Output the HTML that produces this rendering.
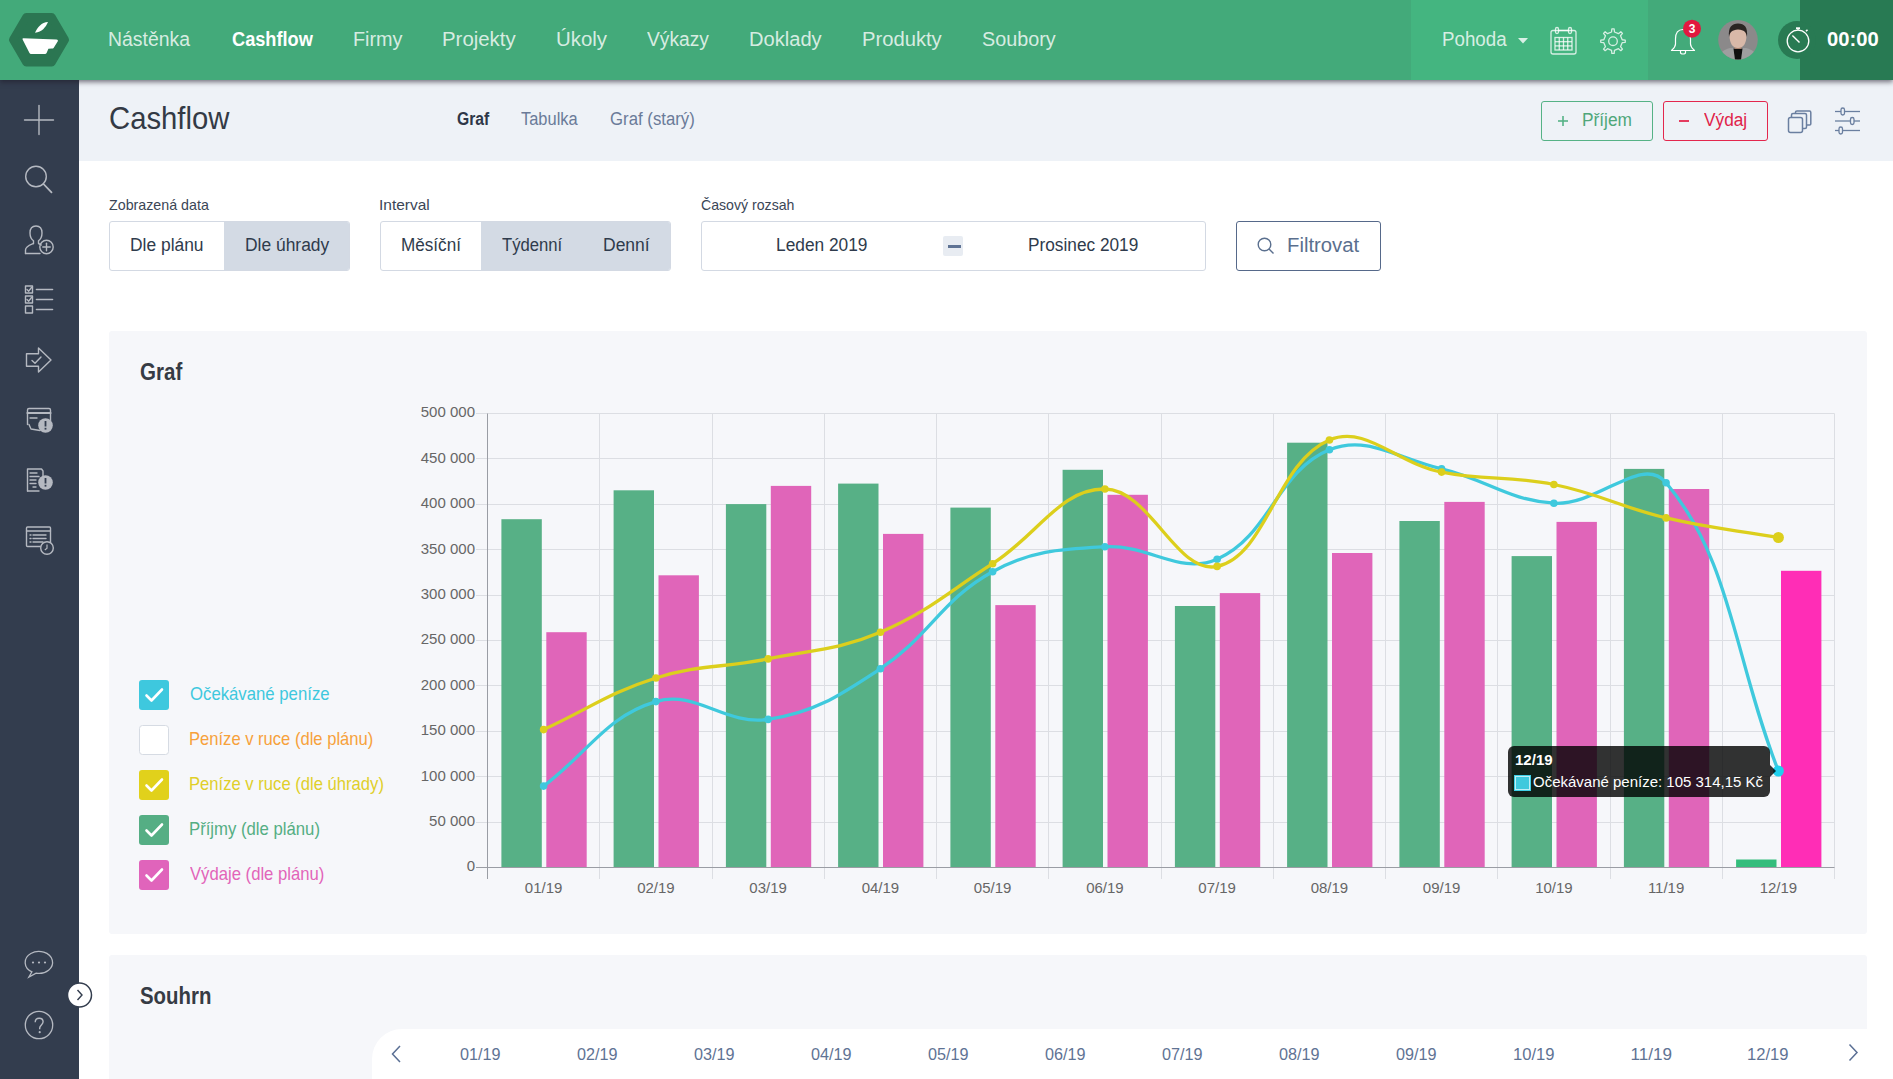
<!DOCTYPE html>
<html lang="cs">
<head>
<meta charset="utf-8">
<title>Cashflow</title>
<style>
html,body{margin:0;padding:0;}
body{width:1893px;height:1079px;overflow:hidden;position:relative;background:#ffffff;font-family:"Liberation Sans",sans-serif;}
.a{position:absolute;}
.t{position:absolute;white-space:nowrap;line-height:1;transform-origin:0 0;z-index:10;}
#hdr{left:0;top:0;width:1893px;height:80px;background:#43aa7a;z-index:5;box-shadow:0 2px 5px rgba(30,25,40,0.6);}
#side{left:0;top:80px;width:79px;height:999px;background:#333d4e;z-index:4;}
#sub{left:79px;top:80px;width:1814px;height:81px;background:#eef2f7;}
.card{background:#f6f7fa;border-radius:3px;}
.seg{border:1px solid #d3d9e3;border-radius:3px;background:#fff;box-sizing:border-box;overflow:hidden;}
.ic{position:absolute;overflow:visible;}
#tip{left:1508px;top:746px;width:262px;height:51px;background:rgba(0,0,0,0.8);border-radius:6px;z-index:8;}
</style>
</head>
<body>
<!-- header -->
<div class="a" id="hdr">
  <div class="a" style="left:1411px;top:0;width:237px;height:80px;background:#44b580;"></div>
  <div class="a" style="left:1800px;top:0;width:93px;height:80px;background:#287a53;"></div>
  <div class="a" style="left:1778px;top:21px;width:38px;height:38px;border-radius:50%;background:#287a53;"></div>
</div>

<svg class="a" style="left:0;top:0;z-index:6;" width="1893" height="80" viewBox="0 0 1893 80">
  <!-- logo -->
  <path d="M26.3 17 L51.7 17 L65 39.8 L51.7 62.5 L26.3 62.5 L13 39.8 Z" fill="#2b7652" stroke="#2b7652" stroke-width="8" stroke-linejoin="round"/>
  <path d="M23.3 38.3 L56.5 39.6 Q58.5 39.8 57.8 41.2 L53.6 48 Q53.1 48.6 52 48.6 L48.4 48.8 L46.6 53 Q46.1 54 45 54 L31 54 Q30 54 29.5 53 L22.6 39.6 Q22.2 38.3 23.3 38.3 Z" fill="#ffffff"/>
  <path d="M35 32.8 C37.5 27 41.5 22.5 48 22 C45.5 27.5 42 32 35 32.8 Z" fill="#ffffff"/>
  <!-- caret -->
  <path d="M1518 38 L1528 38 L1523 43.5 Z" fill="rgba(255,255,255,0.8)"/>
  <!-- calendar -->
  <g fill="none" stroke="rgba(255,255,255,0.78)" stroke-width="1.3">
    <rect x="1551" y="30.5" width="25" height="23.5" rx="2"/>
    <line x1="1558" y1="30.5" x2="1569" y2="30.5"/>
    <rect x="1555.5" y="27.5" width="3" height="6" rx="1.5"/>
    <rect x="1568.5" y="27.5" width="3" height="6" rx="1.5"/>
    <rect x="1555" y="37.5" width="17" height="12.5"/>
    <line x1="1559.25" y1="37.5" x2="1559.25" y2="50"/>
    <line x1="1563.5" y1="37.5" x2="1563.5" y2="50"/>
    <line x1="1567.75" y1="37.5" x2="1567.75" y2="50"/>
    <line x1="1555" y1="41.7" x2="1572" y2="41.7"/>
    <line x1="1555" y1="45.9" x2="1572" y2="45.9"/>
  </g>
  <!-- gear -->
  <g fill="none" stroke="rgba(255,255,255,0.78)" stroke-width="1.3" stroke-linejoin="round">
    <path d="M1611.55 32.01 L1611.84 28.95 L1614.16 28.95 L1614.45 32.01 L1618.47 33.68 L1620.84 31.72 L1622.48 33.36 L1620.52 35.73 L1622.19 39.75 L1625.25 40.04 L1625.25 42.36 L1622.19 42.65 L1620.52 46.67 L1622.48 49.04 L1620.84 50.68 L1618.47 48.72 L1614.45 50.39 L1614.16 53.45 L1611.84 53.45 L1611.55 50.39 L1607.53 48.72 L1605.16 50.68 L1603.52 49.04 L1605.48 46.67 L1603.81 42.65 L1600.75 42.36 L1600.75 40.04 L1603.81 39.75 L1605.48 35.73 L1603.52 33.36 L1605.16 31.72 L1607.53 33.68 Z"/>
    <circle cx="1613" cy="41.2" r="4.3"/>
  </g>
  <!-- bell -->
  <g fill="none" stroke="#ffffff" stroke-width="1.2" stroke-linejoin="round">
    <path d="M1683 29.5 C1677.5 29.5 1675.5 34 1675.5 39 L1675.5 44 C1675.5 47 1673 49 1671.5 50.5 L1694.5 50.5 C1693 49 1690.5 47 1690.5 44 L1690.5 39 C1690.5 34 1688.5 29.5 1683 29.5 Z"/>
    <path d="M1680.5 50.5 L1680.5 52.5 C1680.5 54.5 1685.5 54.5 1685.5 52.5 L1685.5 50.5"/>
  </g>
  <circle cx="1692" cy="28.7" r="9" fill="#e2183f"/>
  <text x="1692" y="33" text-anchor="middle" font-family="Liberation Sans" font-weight="700" font-size="12" fill="#fff">3</text>
  <!-- avatar -->
  <clipPath id="avc"><circle cx="1738" cy="39.8" r="19.8"/></clipPath>
  <g clip-path="url(#avc)">
    <rect x="1718" y="20" width="40" height="40" fill="#8b898a"/>
    <path d="M1718 60 C1719 53 1723 50 1730 48 L1746 48 C1753 50 1757 53 1758 60 Z" fill="#9e9e9f"/>
    <path d="M1733.5 48.5 L1742.5 48.5 L1741 60 L1735 60 Z" fill="#0e0e0e"/>
    <rect x="1734.5" y="42" width="7" height="7" fill="#a9826f"/>
    <path d="M1729.5 35 C1729.5 44 1733 48 1738 48 C1743 48 1746.5 44 1746.5 35 C1746.5 30 1743 28 1738 28 C1733 28 1729.5 30 1729.5 35 Z" fill="#d9b8a8"/>
    <path d="M1729 37 C1728 27 1732 23.5 1738 23.5 C1744.5 23.5 1748 27 1747 37 C1746 32 1744.5 30 1738 29.5 C1732 30 1730 32 1729 37 Z" fill="#2a2422"/>
  </g>
  <!-- stopwatch -->
  <g fill="none" stroke="#ffffff" stroke-width="1.3">
    <circle cx="1798" cy="41" r="10.8"/>
    <line x1="1798" y1="30.2" x2="1798" y2="28.5"/>
    <line x1="1796" y1="28.2" x2="1800" y2="28.2" stroke-width="1.8"/>
    <line x1="1806" y1="31.2" x2="1807.5" y2="29.7" stroke-width="1.6"/>
    <line x1="1792.4" y1="35.6" x2="1799.5" y2="42.6" stroke-width="1.4"/>
  </g>
</svg>

<!-- sidebar -->
<div class="a" id="side"></div>
<!-- subheader -->
<div class="a" id="sub"></div>

<svg class="a" style="left:0;top:0;z-index:4;" width="100" height="1079" viewBox="0 0 100 1079">
  <g fill="none" stroke="#b5b9c1" stroke-width="1.4" stroke-linecap="round" stroke-linejoin="round">
    <line x1="24.5" y1="120" x2="53.5" y2="120"/>
    <line x1="39" y1="105.5" x2="39" y2="134.5"/>
    <circle cx="36" cy="176.5" r="10.3"/>
    <line x1="43.5" y1="184" x2="51.5" y2="192.3" stroke-width="1.8"/>
    <path d="M25.5 253.5 L25.5 250 C25.5 246.5 30 245 33.5 243.5 L33.5 240.8 C31 239 30 236.5 30 233 C30 228.5 32.5 226 36 226 C39.5 226 42 228.5 42 233 C42 236.5 41 239 38.5 240.8 L38.5 243.5 C39.5 244 40.5 244.5 41.3 245"/>
    <line x1="25.5" y1="253.5" x2="40" y2="253.5"/>
    <circle cx="46.5" cy="247" r="6.7"/>
    <line x1="46.5" y1="243.3" x2="46.5" y2="250.7"/>
    <line x1="42.8" y1="247" x2="50.2" y2="247"/>
    <rect x="25.5" y="286" width="7" height="7"/>
    <rect x="25.5" y="296" width="7" height="7"/>
    <rect x="25.5" y="306" width="7" height="7"/>
    <path d="M27 289.5 L28.7 291.2 L31.5 287.5"/>
    <path d="M27 299.5 L28.7 301.2 L31.5 297.5"/>
    <line x1="36.5" y1="289.5" x2="52.5" y2="289.5" stroke-width="1.6"/>
    <line x1="36.5" y1="299.5" x2="52.5" y2="299.5" stroke-width="1.6"/>
    <line x1="36.5" y1="309.5" x2="52.5" y2="309.5" stroke-width="1.6"/>
    <path d="M26.5 353.8 L38.5 353.8 L38.5 348 L51 360 L38.5 372 L38.5 366.2 L26.5 366.2 Z"/>
    <path d="M32 360.5 L35 363.3 L41 357"/>
    <path d="M27.5 424.5 L27.5 410 Q27.5 408.5 29 408.5 L49 408.5 Q50.5 408.5 50.5 410 L50.5 420"/>
    <line x1="27.5" y1="413" x2="50.5" y2="413" stroke-width="2.2"/>
    <line x1="30" y1="418" x2="37" y2="418"/>
    <path d="M29 424.5 L31 429 L40 430.5"/>
    <path d="M27.5 491 L27.5 469 L41.5 469 L43 471 L43 476"/>
    <line x1="27.5" y1="491" x2="39" y2="491"/>
    <line x1="30" y1="473" x2="37" y2="473"/>
    <line x1="30" y1="476.5" x2="39" y2="476.5"/>
    <line x1="30" y1="480" x2="36" y2="480"/>
    <line x1="30" y1="483.5" x2="36" y2="483.5"/>
    <line x1="33" y1="487" x2="36" y2="487"/>
    <rect x="26.5" y="527" width="24" height="19.5" rx="1"/>
    <line x1="26.5" y1="531" x2="50.5" y2="531"/>
    <line x1="30" y1="535" x2="31" y2="535"/><line x1="33" y1="535" x2="46" y2="535"/>
    <line x1="30" y1="538.5" x2="31" y2="538.5"/><line x1="33" y1="538.5" x2="46" y2="538.5"/>
    <line x1="30" y1="542" x2="31" y2="542"/><line x1="33" y1="542" x2="43" y2="542"/>
  </g>
  <circle cx="45.5" cy="425.5" r="7.3" fill="#b5b9c1"/>
  <circle cx="45.5" cy="482.5" r="7.3" fill="#b5b9c1"/>
  <g fill="#333d4e"><rect x="44.6" y="421" width="1.8" height="5.5"/><rect x="44.6" y="427.8" width="1.8" height="1.8"/>
  <rect x="44.6" y="478" width="1.8" height="5.5"/><rect x="44.6" y="484.8" width="1.8" height="1.8"/></g>
  <circle cx="47" cy="548" r="6.3" fill="#333d4e" stroke="#b5b9c1" stroke-width="1.4"/>
  <path d="M47 544.5 L47 548.3 L44.8 550" fill="none" stroke="#b5b9c1" stroke-width="1.2"/>
  <g fill="none" stroke="#b5b9c1" stroke-width="1.3">
    <path d="M31.9 971.9 A13.7 11 0 1 1 36.1 973.2 L28.9 977 Z"/>
    <circle cx="39" cy="1025" r="13.7"/>
  </g>
  <g fill="#b5b9c1"><circle cx="33" cy="962.5" r="1.1"/><circle cx="39" cy="962.5" r="1.1"/><circle cx="45" cy="962.5" r="1.1"/></g>
  <path d="M35.2 1022.3 C35.2 1019.6 37 1018.2 39.2 1018.2 C41.5 1018.2 43.1 1019.7 43.1 1021.8 C43.1 1024.6 39.7 1025.2 39.7 1028 L39.7 1029.2" fill="none" stroke="#b5b9c1" stroke-width="1.4"/><circle cx="39.7" cy="1032.2" r="1.1" fill="#b5b9c1"/>
  <circle cx="79.5" cy="995" r="12" fill="#ffffff" stroke="#333d4e" stroke-width="1.5"/>
  <path d="M77.5 990 L82 995 L77.5 1000" fill="none" stroke="#333d4e" stroke-width="1.4"/>
</svg>


<!-- buttons -->
<div class="a" style="left:1541px;top:101px;width:112px;height:40px;border:1px solid #55b286;border-radius:3px;box-sizing:border-box;"></div>
<div class="a" style="left:1663px;top:101px;width:105px;height:40px;border:1px solid #e3274d;border-radius:3px;box-sizing:border-box;"></div>
<svg class="a" style="left:0;top:0;z-index:3;" width="1893" height="300" viewBox="0 0 1893 300">
  <g stroke="#55b286" stroke-width="1.6"><line x1="1558" y1="121" x2="1568" y2="121"/><line x1="1563" y1="116" x2="1563" y2="126"/></g>
  <line x1="1679" y1="121" x2="1689" y2="121" stroke="#e3274d" stroke-width="1.8"/>
  <g fill="none" stroke="#6a7fa0" stroke-width="1.5" stroke-linejoin="round">
    <rect x="1788.5" y="117.5" width="14" height="15" rx="2"/>
    <path d="M1791.5 117.5 L1791.5 115 Q1791.5 113.5 1793 113.5 L1805 113.5 Q1806.5 113.5 1806.5 115 L1806.5 127 Q1806.5 128.5 1805 128.5 L1802.5 128.5"/>
    <path d="M1795.5 113.5 L1795.5 112 Q1795.5 111 1797 111 L1809.5 111 Q1810.8 111 1810.8 112.5 L1810.8 124 Q1810.8 125 1809.5 125 L1806.5 125"/>
  </g>
  <g fill="none" stroke="#6a7fa0" stroke-width="1.3">
    <line x1="1835" y1="111.5" x2="1860" y2="111.5"/>
    <line x1="1835" y1="121" x2="1860" y2="121"/>
    <line x1="1835" y1="130.5" x2="1860" y2="130.5"/>
  </g>
  <g fill="#eef2f7" stroke="#6a7fa0" stroke-width="1.3">
    <rect x="1841" y="108" width="3.5" height="7" rx="1.75"/>
    <rect x="1850.5" y="117.5" width="3.5" height="7" rx="1.75"/>
    <rect x="1839" y="127" width="3.5" height="7" rx="1.75"/>
  </g>
  <g fill="none" stroke="#5a6f8e" stroke-width="1.4">
    <circle cx="1264.5" cy="244.5" r="6.3"/>
    <line x1="1269" y1="249" x2="1273.5" y2="253.5"/>
  </g>
</svg>

<!-- filters -->
<div class="a seg" style="left:109px;top:221px;width:241px;height:50px;">
  <div class="a" style="left:114px;top:0;width:127px;height:48px;background:#d3dae4;"></div>
</div>
<div class="a seg" style="left:380px;top:221px;width:291px;height:50px;">
  <div class="a" style="left:100px;top:0;width:190px;height:48px;background:#d3dae4;"></div>
</div>
<div class="a seg" style="left:701px;top:221px;width:505px;height:50px;">
  <div class="a" style="left:241px;top:14px;width:20px;height:20px;background:#e8ecf2;border-radius:2px;"></div>
  <div class="a" style="left:246px;top:23px;width:13px;height:3px;background:#5f7394;"></div>
</div>
<div class="a" style="left:1236px;top:221px;width:145px;height:50px;border:1px solid #56698a;border-radius:3px;box-sizing:border-box;"></div>

<!-- cards -->
<div class="a card" style="left:109px;top:331px;width:1758px;height:603px;"></div>
<div class="a card" style="left:109px;top:955px;width:1758px;height:200px;"></div>
<div class="a" style="left:372px;top:1029px;width:1530px;height:100px;background:#fff;border-radius:30px;"></div>

<!-- chart -->
<svg class="a" style="left:0;top:0;z-index:2;" width="1893" height="1079" viewBox="0 0 1893 1079">
<style>.ax{font-family:"Liberation Sans",sans-serif;font-size:15px;fill:#666666;}</style>
<line x1="476" y1="413.5" x2="1834.5" y2="413.5" stroke="#dcdee3" stroke-width="1"/>
<line x1="476" y1="458.5" x2="1834.5" y2="458.5" stroke="#dcdee3" stroke-width="1"/>
<line x1="476" y1="504.5" x2="1834.5" y2="504.5" stroke="#dcdee3" stroke-width="1"/>
<line x1="476" y1="549.5" x2="1834.5" y2="549.5" stroke="#dcdee3" stroke-width="1"/>
<line x1="476" y1="595.5" x2="1834.5" y2="595.5" stroke="#dcdee3" stroke-width="1"/>
<line x1="476" y1="640.5" x2="1834.5" y2="640.5" stroke="#dcdee3" stroke-width="1"/>
<line x1="476" y1="685.5" x2="1834.5" y2="685.5" stroke="#dcdee3" stroke-width="1"/>
<line x1="476" y1="731.5" x2="1834.5" y2="731.5" stroke="#dcdee3" stroke-width="1"/>
<line x1="476" y1="776.5" x2="1834.5" y2="776.5" stroke="#dcdee3" stroke-width="1"/>
<line x1="476" y1="822.5" x2="1834.5" y2="822.5" stroke="#dcdee3" stroke-width="1"/>
<line x1="599.5" y1="413.5" x2="599.5" y2="879" stroke="#dcdee3" stroke-width="1"/>
<line x1="712.5" y1="413.5" x2="712.5" y2="879" stroke="#dcdee3" stroke-width="1"/>
<line x1="824.5" y1="413.5" x2="824.5" y2="879" stroke="#dcdee3" stroke-width="1"/>
<line x1="936.5" y1="413.5" x2="936.5" y2="879" stroke="#dcdee3" stroke-width="1"/>
<line x1="1048.5" y1="413.5" x2="1048.5" y2="879" stroke="#dcdee3" stroke-width="1"/>
<line x1="1161.5" y1="413.5" x2="1161.5" y2="879" stroke="#dcdee3" stroke-width="1"/>
<line x1="1273.5" y1="413.5" x2="1273.5" y2="879" stroke="#dcdee3" stroke-width="1"/>
<line x1="1385.5" y1="413.5" x2="1385.5" y2="879" stroke="#dcdee3" stroke-width="1"/>
<line x1="1497.5" y1="413.5" x2="1497.5" y2="879" stroke="#dcdee3" stroke-width="1"/>
<line x1="1610.5" y1="413.5" x2="1610.5" y2="879" stroke="#dcdee3" stroke-width="1"/>
<line x1="1722.5" y1="413.5" x2="1722.5" y2="879" stroke="#dcdee3" stroke-width="1"/>
<line x1="1834.5" y1="413.5" x2="1834.5" y2="879" stroke="#dcdee3" stroke-width="1"/>
<text x="475" y="417.4" text-anchor="end" class="ax">500 000</text>
<text x="475" y="462.8" text-anchor="end" class="ax">450 000</text>
<text x="475" y="508.2" text-anchor="end" class="ax">400 000</text>
<text x="475" y="553.6" text-anchor="end" class="ax">350 000</text>
<text x="475" y="599.0" text-anchor="end" class="ax">300 000</text>
<text x="475" y="644.4" text-anchor="end" class="ax">250 000</text>
<text x="475" y="689.8" text-anchor="end" class="ax">200 000</text>
<text x="475" y="735.2" text-anchor="end" class="ax">150 000</text>
<text x="475" y="780.6" text-anchor="end" class="ax">100 000</text>
<text x="475" y="826.0" text-anchor="end" class="ax">50 000</text>
<text x="475" y="871.4" text-anchor="end" class="ax">0</text>
<rect x="501.4" y="519.2" width="40.4" height="348.3" fill="#57b086"/>
<rect x="546.3" y="632.2" width="40.4" height="235.3" fill="#e065b9"/>
<rect x="613.6" y="490.3" width="40.4" height="377.2" fill="#57b086"/>
<rect x="658.5" y="575.3" width="40.4" height="292.2" fill="#e065b9"/>
<rect x="725.9" y="504.1" width="40.4" height="363.4" fill="#57b086"/>
<rect x="770.8" y="485.9" width="40.4" height="381.6" fill="#e065b9"/>
<rect x="838.1" y="483.6" width="40.4" height="383.9" fill="#57b086"/>
<rect x="883.0" y="533.9" width="40.4" height="333.6" fill="#e065b9"/>
<rect x="950.4" y="507.6" width="40.4" height="359.9" fill="#57b086"/>
<rect x="995.3" y="605.1" width="40.4" height="262.4" fill="#e065b9"/>
<rect x="1062.6" y="469.8" width="40.4" height="397.7" fill="#57b086"/>
<rect x="1107.5" y="494.8" width="40.4" height="372.8" fill="#e065b9"/>
<rect x="1174.9" y="606.0" width="40.4" height="261.5" fill="#57b086"/>
<rect x="1219.8" y="593.1" width="40.4" height="274.4" fill="#e065b9"/>
<rect x="1287.1" y="442.7" width="40.4" height="424.8" fill="#57b086"/>
<rect x="1332.0" y="553.0" width="40.4" height="314.5" fill="#e065b9"/>
<rect x="1399.4" y="521.0" width="40.4" height="346.5" fill="#57b086"/>
<rect x="1444.3" y="501.9" width="40.4" height="365.6" fill="#e065b9"/>
<rect x="1511.6" y="556.1" width="40.4" height="311.4" fill="#57b086"/>
<rect x="1556.5" y="521.9" width="40.4" height="345.6" fill="#e065b9"/>
<rect x="1623.9" y="468.9" width="40.4" height="398.6" fill="#57b086"/>
<rect x="1668.8" y="489.0" width="40.4" height="378.5" fill="#e065b9"/>
<rect x="1736.1" y="859.5" width="40.4" height="8.0" fill="#34bd7c"/>
<rect x="1781.0" y="570.8" width="40.4" height="296.7" fill="#ff2db6"/>
<line x1="487.5" y1="413.5" x2="487.5" y2="879" stroke="#9a9da4" stroke-width="1"/>
<line x1="476" y1="867.5" x2="1834.5" y2="867.5" stroke="#9a9da4" stroke-width="1"/>
<text x="543.6" y="892.8" text-anchor="middle" class="ax">01/19</text>
<text x="655.9" y="892.8" text-anchor="middle" class="ax">02/19</text>
<text x="768.1" y="892.8" text-anchor="middle" class="ax">03/19</text>
<text x="880.4" y="892.8" text-anchor="middle" class="ax">04/19</text>
<text x="992.6" y="892.8" text-anchor="middle" class="ax">05/19</text>
<text x="1104.9" y="892.8" text-anchor="middle" class="ax">06/19</text>
<text x="1217.1" y="892.8" text-anchor="middle" class="ax">07/19</text>
<text x="1329.4" y="892.8" text-anchor="middle" class="ax">08/19</text>
<text x="1441.6" y="892.8" text-anchor="middle" class="ax">09/19</text>
<text x="1553.9" y="892.8" text-anchor="middle" class="ax">10/19</text>
<text x="1666.1" y="892.8" text-anchor="middle" class="ax">11/19</text>
<text x="1778.4" y="892.8" text-anchor="middle" class="ax">12/19</text>
<path d="M543.6 786.1 C588.5 752.3 606.2 716.3 655.9 701.6 C696.0 689.7 725.0 725.7 768.1 719.4 C814.8 712.6 839.6 695.5 880.4 668.7 C929.4 636.4 942.0 599.2 992.6 571.7 C1031.8 550.4 1059.6 549.3 1104.9 546.8 C1149.4 544.3 1179.5 575.5 1217.1 559.2 C1269.3 536.7 1277.4 470.7 1329.4 449.8 C1367.2 434.6 1397.4 458.4 1441.6 468.9 C1487.2 479.8 1508.3 500.4 1553.9 503.2 C1598.1 505.9 1641.9 453.8 1666.1 482.7 C1731.7 561.0 1733.5 655.7 1778.4 771.0" fill="none" stroke="#3fc9dd" stroke-width="3.3"/>
<circle cx="543.6" cy="786.1" r="3.8" fill="#3fc9dd"/>
<circle cx="655.9" cy="701.6" r="3.8" fill="#3fc9dd"/>
<circle cx="768.1" cy="719.4" r="3.8" fill="#3fc9dd"/>
<circle cx="880.4" cy="668.7" r="3.8" fill="#3fc9dd"/>
<circle cx="992.6" cy="571.7" r="3.8" fill="#3fc9dd"/>
<circle cx="1104.9" cy="546.8" r="3.8" fill="#3fc9dd"/>
<circle cx="1217.1" cy="559.2" r="3.8" fill="#3fc9dd"/>
<circle cx="1329.4" cy="449.8" r="3.8" fill="#3fc9dd"/>
<circle cx="1441.6" cy="468.9" r="3.8" fill="#3fc9dd"/>
<circle cx="1553.9" cy="503.2" r="3.8" fill="#3fc9dd"/>
<circle cx="1666.1" cy="482.7" r="3.8" fill="#3fc9dd"/>
<circle cx="1778.4" cy="771.0" r="5.5" fill="#1fd0ee"/>
<path d="M543.6 729.6 C588.5 709.0 609.1 692.7 655.9 678.0 C698.9 664.4 723.5 668.0 768.1 658.9 C813.3 649.7 838.4 650.0 880.4 632.2 C928.2 611.9 948.3 592.0 992.6 563.7 C1038.1 534.7 1060.2 488.5 1104.9 489.0 C1150.0 489.5 1177.0 575.2 1217.1 566.4 C1266.8 555.6 1276.3 462.3 1329.4 440.0 C1366.1 424.6 1396.0 463.0 1441.6 472.1 C1485.8 480.8 1509.8 475.5 1553.9 484.5 C1599.6 493.8 1620.6 507.2 1666.1 517.9 C1710.4 528.4 1733.5 529.7 1778.4 537.5" fill="none" stroke="#dccf1c" stroke-width="3.3"/>
<circle cx="543.6" cy="729.6" r="3.8" fill="#dccf1c"/>
<circle cx="655.9" cy="678.0" r="3.8" fill="#dccf1c"/>
<circle cx="768.1" cy="658.9" r="3.8" fill="#dccf1c"/>
<circle cx="880.4" cy="632.2" r="3.8" fill="#dccf1c"/>
<circle cx="992.6" cy="563.7" r="3.8" fill="#dccf1c"/>
<circle cx="1104.9" cy="489.0" r="3.8" fill="#dccf1c"/>
<circle cx="1217.1" cy="566.4" r="3.8" fill="#dccf1c"/>
<circle cx="1329.4" cy="440.0" r="3.8" fill="#dccf1c"/>
<circle cx="1441.6" cy="472.1" r="3.8" fill="#dccf1c"/>
<circle cx="1553.9" cy="484.5" r="3.8" fill="#dccf1c"/>
<circle cx="1666.1" cy="517.9" r="3.8" fill="#dccf1c"/>
<circle cx="1778.4" cy="537.5" r="5.5" fill="#dccf1c"/>
</svg>


<svg class="a" style="left:0;top:0;z-index:3;" width="1893" height="1079" viewBox="0 0 1893 1079">
  <rect x="139" y="680" width="30" height="30" rx="3" fill="#3ec8de"/>
  <rect x="139.5" y="725.5" width="29" height="29" rx="3" fill="#ffffff" stroke="#d6dbe3"/>
  <rect x="139" y="770" width="30" height="30" rx="3" fill="#e1d11b"/>
  <rect x="139" y="815" width="30" height="30" rx="3" fill="#55ae84"/>
  <rect x="139" y="860" width="30" height="30" rx="3" fill="#e064bb"/>
  <g fill="none" stroke="#ffffff" stroke-width="2.6" stroke-linecap="round" stroke-linejoin="round">
    <path d="M146.5 695.5 L151.5 700.5 L162 689.5"/>
    <path d="M146.5 785.5 L151.5 790.5 L162 779.5"/>
    <path d="M146.5 830.5 L151.5 835.5 L162 824.5"/>
    <path d="M146.5 875.5 L151.5 880.5 L162 869.5"/>
  </g>
  <g fill="none" stroke="#5a6f94" stroke-width="1.5">
    <path d="M400 1046 L392.5 1054 L400 1062"/>
    <path d="M1849.5 1044.5 L1857 1052.5 L1849.5 1060.5"/>
  </g>
  <path d="M1770 765 L1776 771 L1770 777 Z" fill="rgba(0,0,0,0.8)"/>
  
</svg>

<!-- tooltip -->
<div class="a" id="tip"></div>
<svg class="a" style="left:1500px;top:760px;z-index:9;" width="40" height="40" viewBox="1500 760 40 40"><rect x="1514" y="775" width="17" height="16" fill="#3fd0e6"/><rect x="1515.5" y="776.5" width="14" height="13" fill="#3fc9dd" stroke="#bfeef6" stroke-width="1"/></svg>

<div class="t" id="n1" style="left:108.2px;top:28.6px;font-size:20px;color:rgba(255,255,255,0.8);font-weight:400;transform:scaleX(0.9707);">Nástěnka</div>
<div class="t" id="n2" style="left:231.7px;top:28.6px;font-size:20px;color:#ffffff;font-weight:700;transform:scaleX(0.9089);">Cashflow</div>
<div class="t" id="n3" style="left:353.0px;top:28.6px;font-size:20px;color:rgba(255,255,255,0.8);font-weight:400;transform:scaleX(0.9902);">Firmy</div>
<div class="t" id="n4" style="left:442.4px;top:28.6px;font-size:20px;color:rgba(255,255,255,0.8);font-weight:400;transform:scaleX(1.0190);">Projekty</div>
<div class="t" id="n5" style="left:555.5px;top:28.6px;font-size:20px;color:rgba(255,255,255,0.8);font-weight:400;transform:scaleX(1.0202);">Úkoly</div>
<div class="t" id="n6" style="left:647.0px;top:28.6px;font-size:20px;color:rgba(255,255,255,0.8);font-weight:400;transform:scaleX(0.9602);">Výkazy</div>
<div class="t" id="n7" style="left:749.2px;top:28.6px;font-size:20px;color:rgba(255,255,255,0.8);font-weight:400;transform:scaleX(1.0048);">Doklady</div>
<div class="t" id="n8" style="left:861.9px;top:28.6px;font-size:20px;color:rgba(255,255,255,0.8);font-weight:400;transform:scaleX(1.0099);">Produkty</div>
<div class="t" id="n9" style="left:982.1px;top:28.6px;font-size:20px;color:rgba(255,255,255,0.8);font-weight:400;transform:scaleX(0.9880);">Soubory</div>
<div class="t" id="poh" style="left:1441.6px;top:28.7px;font-size:20px;color:rgba(255,255,255,0.8);font-weight:400;transform:scaleX(0.9371);">Pohoda</div>
<div class="t" id="tm" style="left:1827.0px;top:28.3px;font-size:21px;color:#ffffff;font-weight:700;transform:scaleX(0.9617);">00:00</div>
<div class="t" id="ttl" style="left:109.1px;top:102.1px;font-size:32px;color:#333a45;font-weight:400;transform:scaleX(0.9148);">Cashflow</div>
<div class="t" id="tb1" style="left:457.4px;top:109.5px;font-size:18px;color:#2d3748;font-weight:700;transform:scaleX(0.8733);">Graf</div>
<div class="t" id="tb2" style="left:521.0px;top:109.5px;font-size:18px;color:#6a7b99;font-weight:400;transform:scaleX(0.9138);">Tabulka</div>
<div class="t" id="tb3" style="left:609.7px;top:109.5px;font-size:18px;color:#6a7b99;font-weight:400;transform:scaleX(0.9321);">Graf (starý)</div>
<div class="t" id="bp" style="left:1582.0px;top:111.3px;font-size:18px;color:#4fa77a;font-weight:400;transform:scaleX(0.9598);">Příjem</div>
<div class="t" id="bv" style="left:1703.8px;top:111.3px;font-size:18px;color:#e0234a;font-weight:400;transform:scaleX(0.9585);">Výdaj</div>
<div class="t" id="l1" style="left:109.2px;top:196.8px;font-size:15px;color:#3b4656;font-weight:400;transform:scaleX(0.9505);">Zobrazená data</div>
<div class="t" id="l2" style="left:379.4px;top:196.8px;font-size:15px;color:#3b4656;font-weight:400;transform:scaleX(1.0322);">Interval</div>
<div class="t" id="l3" style="left:701.0px;top:196.8px;font-size:15px;color:#3b4656;font-weight:400;transform:scaleX(0.9417);">Časový rozsah</div>
<div class="t" id="s1" style="left:130.4px;top:236.4px;font-size:18px;color:#2f3b4c;font-weight:400;transform:scaleX(0.9670);">Dle plánu</div>
<div class="t" id="s2" style="left:244.7px;top:236.4px;font-size:18px;color:#2f3b4c;font-weight:400;transform:scaleX(0.9681);">Dle úhrady</div>
<div class="t" id="s3" style="left:401.0px;top:236.4px;font-size:18px;color:#2f3b4c;font-weight:400;transform:scaleX(0.9514);">Měsíční</div>
<div class="t" id="s4" style="left:502.0px;top:236.4px;font-size:18px;color:#2f3b4c;font-weight:400;transform:scaleX(0.9256);">Týdenní</div>
<div class="t" id="s5" style="left:603.0px;top:236.4px;font-size:18px;color:#2f3b4c;font-weight:400;transform:scaleX(0.9717);">Denní</div>
<div class="t" id="d1" style="left:776.4px;top:236.4px;font-size:18px;color:#2f3b4c;font-weight:400;transform:scaleX(0.9619);">Leden 2019</div>
<div class="t" id="d2" style="left:1028.0px;top:236.4px;font-size:18px;color:#2f3b4c;font-weight:400;transform:scaleX(0.9582);">Prosinec 2019</div>
<div class="t" id="flt" style="left:1287.0px;top:234.6px;font-size:20px;color:#5a6f8e;font-weight:400;transform:scaleX(1.0146);">Filtrovat</div>
<div class="t" id="gt" style="left:139.8px;top:360.3px;font-size:24px;color:#363b44;font-weight:700;transform:scaleX(0.8559);">Graf</div>
<div class="t" id="lg0" style="left:189.7px;top:685.1px;font-size:18.5px;color:#3ec8de;font-weight:400;transform:scaleX(0.9047);">Očekávané peníze</div>
<div class="t" id="lg1" style="left:188.8px;top:730.1px;font-size:18.5px;color:#f7a13a;font-weight:400;transform:scaleX(0.8958);">Peníze v ruce (dle plánu)</div>
<div class="t" id="lg2" style="left:188.8px;top:775.1px;font-size:18.5px;color:#e0cf2a;font-weight:400;transform:scaleX(0.8985);">Peníze v ruce (dle úhrady)</div>
<div class="t" id="lg3" style="left:188.8px;top:820.1px;font-size:18.5px;color:#54ae83;font-weight:400;transform:scaleX(0.9033);">Příjmy (dle plánu)</div>
<div class="t" id="lg4" style="left:189.7px;top:865.1px;font-size:18.5px;color:#e264b9;font-weight:400;transform:scaleX(0.9009);">Výdaje (dle plánu)</div>
<div class="t" id="sh" style="left:139.5px;top:983.6px;font-size:24px;color:#363b44;font-weight:700;transform:scaleX(0.8497);">Souhrn</div>
<div class="t" id="m0" style="left:480.0px;top:1047.0px;font-size:16px;color:#5f7394;font-weight:400;transform:translateX(-50%) scaleX(1.0114);">01/19</div>
<div class="t" id="m1" style="left:597.0px;top:1047.0px;font-size:16px;color:#5f7394;font-weight:400;transform:translateX(-50%) scaleX(1.0114);">02/19</div>
<div class="t" id="m2" style="left:714.0px;top:1047.0px;font-size:16px;color:#5f7394;font-weight:400;transform:translateX(-50%) scaleX(1.0114);">03/19</div>
<div class="t" id="m3" style="left:831.0px;top:1047.0px;font-size:16px;color:#5f7394;font-weight:400;transform:translateX(-50%) scaleX(1.0114);">04/19</div>
<div class="t" id="m4" style="left:948.0px;top:1047.0px;font-size:16px;color:#5f7394;font-weight:400;transform:translateX(-50%) scaleX(1.0114);">05/19</div>
<div class="t" id="m5" style="left:1065.0px;top:1047.0px;font-size:16px;color:#5f7394;font-weight:400;transform:translateX(-50%) scaleX(1.0114);">06/19</div>
<div class="t" id="m6" style="left:1182.0px;top:1047.0px;font-size:16px;color:#5f7394;font-weight:400;transform:translateX(-50%) scaleX(1.0114);">07/19</div>
<div class="t" id="m7" style="left:1299.0px;top:1047.0px;font-size:16px;color:#5f7394;font-weight:400;transform:translateX(-50%) scaleX(1.0114);">08/19</div>
<div class="t" id="m8" style="left:1416.0px;top:1047.0px;font-size:16px;color:#5f7394;font-weight:400;transform:translateX(-50%) scaleX(1.0114);">09/19</div>
<div class="t" id="m9" style="left:1533.0px;top:1047.0px;font-size:16px;color:#5f7394;font-weight:400;transform:translateX(-50%) scaleX(1.0373);">10/19</div>
<div class="t" id="m10" style="left:1650.0px;top:1047.0px;font-size:16px;color:#5f7394;font-weight:400;transform:translateX(-50%) scaleX(1.0697);">11/19</div>
<div class="t" id="m11" style="left:1767.0px;top:1047.0px;font-size:16px;color:#5f7394;font-weight:400;transform:translateX(-50%) scaleX(1.0373);">12/19</div>
<div class="t" id="tt1" style="left:1515.0px;top:752.4px;font-size:15px;color:#ffffff;font-weight:700;transform:scaleX(1.0028);">12/19</div>
<div class="t" id="tt2" style="left:1532.5px;top:774.1px;font-size:15px;color:#ffffff;font-weight:400;transform:scaleX(0.9993);">Očekávané peníze: 105 314,15 Kč</div>
</body>
</html>
